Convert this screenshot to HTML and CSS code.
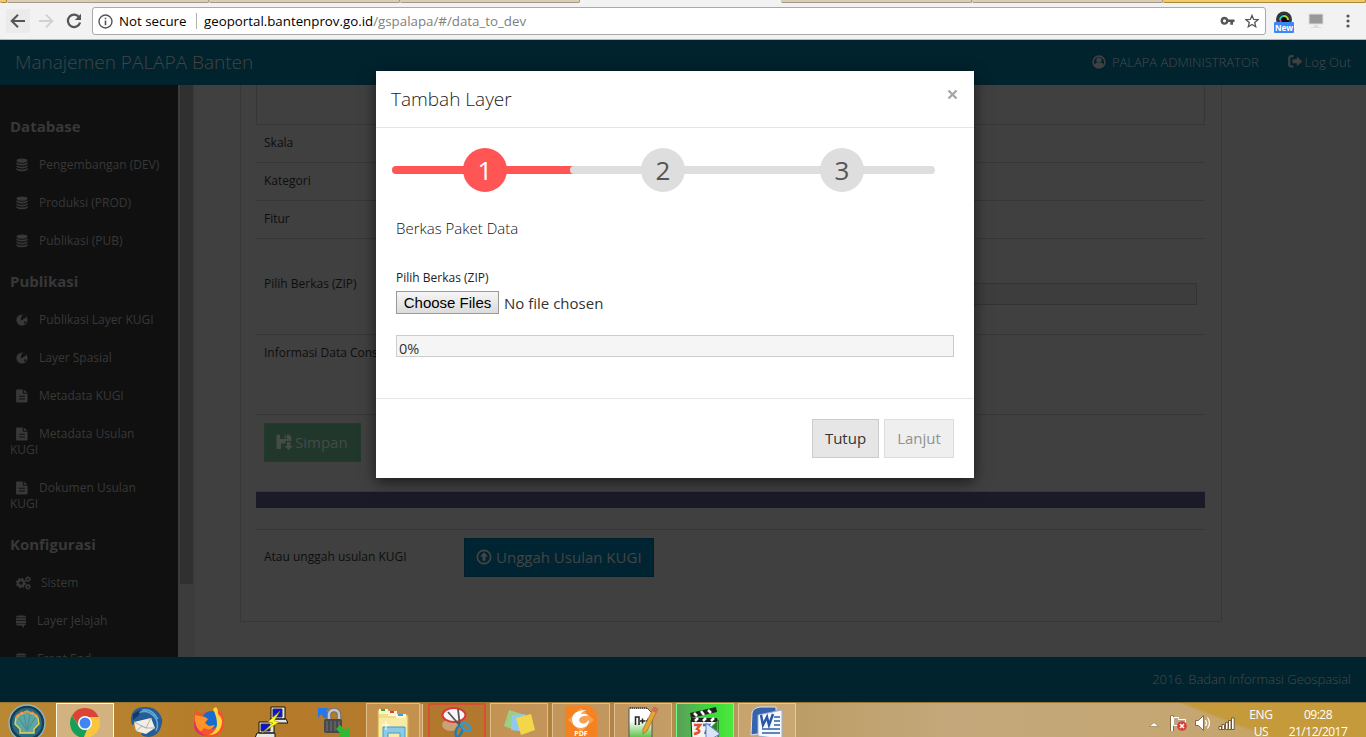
FILE: index.html
```html
<!DOCTYPE html>
<html lang="id">
<head>
<meta charset="utf-8">
<title>Manajemen PALAPA Banten</title>
<link rel="stylesheet" href="styles.css">
</head>
<body>
<svg class="defs" width="0" height="0" aria-hidden="true">
  <symbol id="db" viewBox="0 0 12 14"><ellipse cx="6" cy="2.600" rx="5.600" ry="2.200"/><path d="M.4 4.300q2 1.500 5.600 1.500t5.600-1.500v1.600q-1.500 1.600-5.600 1.600T.4 5.900zM.4 7.200q2 1.500 5.600 1.500t5.600-1.500v1.600q-1.500 1.600-5.600 1.600T.4 8.800zM.4 10.100q2 1.500 5.600 1.500t5.600-1.500v1.600q-1.500 1.600-5.600 1.600T.4 11.700z"/></symbol>
  <symbol id="globe" viewBox="0 0 12 14"><circle cx="6" cy="7" r="5.600"/><path fill="#101010" d="M5.500 2.600l2.600-.7 2 1.600-.6 1.800-1.800.3-1.200 1.500-1.300.2-.5-1.600.8-1zM8.500 8.200l1.900.2-.8 1.800-1.500.9z"/></symbol>
  <symbol id="file" viewBox="0 0 12 14"><path fill-rule="evenodd" d="M.8.5h6v4.2h4.700v8.100a.7.7 0 0 1-.7.7H.8a.7.7 0 0 1-.7-.7V1.200A.7.7 0 0 1 .8.500zM3 6.700v1h6v-1zM3 9.500v1h6v-1z"/><path d="M7.800.5l3.700 3.300H7.800z"/></symbol>
  <symbol id="cogs" viewBox="0 0 15 14"><circle cx="5" cy="7" r="3" fill="none" stroke="currentColor" stroke-width="2.400"/><circle cx="5" cy="7" r="4.500" fill="none" stroke="currentColor" stroke-width="1.400" stroke-dasharray="2 1.530"/><circle cx="12" cy="3.200" r="1.700" fill="none" stroke="currentColor" stroke-width="1.500"/><circle cx="12" cy="3.200" r="2.500" fill="none" stroke="currentColor" stroke-dasharray="1.300 1.310"/><circle cx="12" cy="10.800" r="1.700" fill="none" stroke="currentColor" stroke-width="1.500"/><circle cx="12" cy="10.800" r="2.500" fill="none" stroke="currentColor" stroke-dasharray="1.300 1.310"/></symbol>
  <symbol id="stack" viewBox="0 0 10 14"><path d="M2 1.500h6a2 2 0 0 1 2 2H0a2 2 0 0 1 2-2zM0 4.200h10v2H0zM0 6.900h10v2H0zM0 9.600h10a2 2 0 0 1-2 2v2.400L5.600 11.600H2a2 2 0 0 1-2-2z"/></symbol>
</svg>

<div class="screen">
  <div class="tabs"><i class="tab gold t0"></i><i class="tab t1"></i><i class="tab t2"></i><i class="tab t3"></i><i class="tab open"></i><i class="tab t4"></i><i class="tab t5"></i><i class="tab gold t6"></i></div>
  <div class="toolbar">
    <span class="nav back"><svg width="16" height="16" viewBox="0 0 16 16"><path d="M15 8H2.500M8 1.700L1.700 8L8 14.300" fill="none" stroke="#555" stroke-width="2"/></svg></span>
    <span class="nav"><svg width="16" height="16" viewBox="0 0 16 16"><path d="M1 8h12.500M8 1.700L14.300 8L8 14.300" fill="none" stroke="#d0d0d0" stroke-width="1.800"/></svg></span>
    <span class="nav reload"><svg width="16" height="16" viewBox="0 0 16 16"><path d="M13.300 4.400A6.200 6.200 0 1 0 14.100 9.500" fill="none" stroke="#555" stroke-width="2.200"/><path d="M15 .8V7H8.800z" fill="#555"/></svg></span>
    <div class="omnibox">
      <svg class="info" width="15" height="15" viewBox="0 0 15 15"><circle cx="7.500" cy="7.500" r="6.500" fill="none" stroke="#555" stroke-width="1.400"/><path d="M6.700 6.500h1.600v4.700H6.700zM6.700 3.700h1.600v1.600H6.700z" fill="#555"/></svg>
      <span class="secure">Not secure</span><i class="sep"></i>
      <span class="url">geoportal.bantenprov.go.id<span class="path">/gspalapa/#/data_to_dev</span></span>
      <svg class="key" width="15" height="10" viewBox="0 0 15 10"><path fill="#555" fill-rule="evenodd" d="M4.500.8a4 4 0 0 1 3.900 2.700H14.500V6H13v2.700h-2.700V6H8.400A4 4 0 1 1 4.500.8zm0 2.500a1.500 1.500 0 1 0 0 3.100 1.500 1.500 0 0 0 0-3.100z"/></svg>
      <svg class="star" width="14" height="14" viewBox="0 0 14 14"><path d="M7 1.400l1.700 4 4.300.3-3.300 2.800 1 4.200L7 10.400l-3.700 2.300 1-4.200L1 5.700l4.300-.3z" fill="none" stroke="#555" stroke-width="1.300"/></svg>
    </div>
    <span class="ext"><svg width="20" height="22" viewBox="0 0 20 22"><circle cx="10" cy="8.500" r="8" fill="#30363d"/><circle cx="10" cy="8.500" r="5" fill="#0b0b0b"/><path d="M6 9a4 4 0 0 1 4-4" stroke="#19d3c5" stroke-width="2" fill="none"/><path d="M10 5a4 4 0 0 1 4 4" stroke="#b8d82c" stroke-width="2" fill="none"/><path d="M6.500 8.500v3" stroke="#e23a7a" stroke-width="2"/><rect y="11" width="20" height="11" rx="1" fill="#3f86f5"/></svg><b>New</b></span>
    <svg class="monitor" width="16" height="16" viewBox="0 0 16 16"><rect x=".5" y=".5" width="15" height="11" fill="#ddd"/><rect x="1.500" y="1.500" width="13" height="9" fill="#999"/><path d="M6 12h4v2h3v1H3v-1h3z" fill="#ddd"/></svg>
    <svg class="menu" width="4" height="14" viewBox="0 0 4 14"><circle cx="2" cy="2" r="1.600"/><circle cx="2" cy="7" r="1.600"/><circle cx="2" cy="12" r="1.600"/></svg>
  </div>

  <header class="appbar">
    <span class="brand">Manajemen PALAPA Banten</span>
    <span class="user"><svg width="14" height="14" viewBox="0 0 14 14"><circle cx="7" cy="7" r="5.900" fill="none" stroke="currentColor" stroke-width="1.600"/><circle cx="7" cy="5.200" r="2.600"/><path d="M2.200 10.500Q3 8 5 7.600q2 1 4 0 2 .4 2.800 2.900Q9.800 13 7 13t-4.800-2.500z"/></svg><span class="username">PALAPA ADMINISTRATOR</span></span>
    <span class="logout"><svg width="15" height="13" viewBox="0 0 15 13"><path d="M5.500 1.200H3A2 2 0 0 0 1.200 3v6.500A2 2 0 0 0 3 11.500h2.500" fill="none" stroke="currentColor" stroke-width="2.200"/><path d="M4.500 4.300h4.300V1.500l5.500 4.900-5.500 4.900V8.300H4.500z"/></svg><span class="outlabel">Log Out</span></span>
  </header>

  <div class="work">
    <nav class="side">
      <h4>Database</h4>
      <a><svg class="ic"><use href="#db"/></svg>Pengembangan (DEV)</a>
      <a><svg class="ic"><use href="#db"/></svg>Produksi (PROD)</a>
      <a><svg class="ic"><use href="#db"/></svg>Publikasi (PUB)</a>
      <h4>Publikasi</h4>
      <a><svg class="ic"><use href="#globe"/></svg>Publikasi Layer KUGI</a>
      <a><svg class="ic"><use href="#globe"/></svg>Layer Spasial</a>
      <a><svg class="ic"><use href="#file"/></svg>Metadata KUGI</a>
      <a><svg class="ic"><use href="#file"/></svg>Metadata Usulan<br>KUGI</a>
      <a><svg class="ic"><use href="#file"/></svg>Dokumen Usulan<br>KUGI</a>
      <h4>Konfigurasi</h4>
      <a><svg class="ic wide"><use href="#cogs"/></svg>Sistem</a>
      <a><svg class="ic slim"><use href="#stack"/></svg>Layer Jelajah</a>
      <a><svg class="ic slim"><use href="#stack"/></svg>Front End</a>
    </nav>
    <div class="scroll"><i></i></div>
    <main class="main">
      <div class="panel">
        <div class="box"></div>
        <div class="row">Skala</div>
        <div class="row">Kategori</div>
        <div class="row">Fitur</div>
        <div class="row tall"><span>Pilih Berkas (ZIP)</span><i class="meter"></i></div>
        <div class="row info-row">Informasi Data Cons</div>
        <div class="save-row"><span class="btn save"><svg width="17" height="16" viewBox="0 0 17 16"><path fill-rule="evenodd" d="M.5.500H13l2.500 2.500V7H9.500V9.500H5V15H.5zM4 .500V5h7V.500zM8.500 1.200h1.800v3H8.500z"/><path d="M11 8h3.500v4H17l-4.200 4L8.500 12H11z"/></svg>Simpan</span></div>
        <div class="band"></div>
        <div class="upload-row"><span class="uplabel">Atau unggah usulan KUGI</span><span class="btn upload"><svg width="16" height="16" viewBox="0 0 16 16"><circle cx="8" cy="8" r="6.700" fill="none" stroke="currentColor" stroke-width="1.700"/><path d="M8 3.300l4 4.200H9.500v4.300h-3V7.500H4z"/></svg>Unggah Usulan KUGI</span></div>
      </div>
    </main>
  </div>

  <footer class="foot">2016. Badan Informasi Geospasial</footer>

  <div class="taskbar">
    <span class="task first"><svg width="38" height="38" viewBox="0 0 38 38"><circle cx="19" cy="19" r="18" fill="#173d52" stroke="#8fb4bd" stroke-width="1.500"/><circle cx="19" cy="19" r="15" fill="#286a80"/><path d="M12 29v-4l-5-5 1-6 4-4 3-1 4-2 4 2 3 1 4 4 1 6-5 5v4z" fill="#5fa5a4" stroke="#e9d252" stroke-width="1.400"/><path d="M8 14q0-3 4-4 1-3 4-1 3-3 6 0 3-2 4 1 4 1 4 4" stroke="#ed8a3d" stroke-width="1.500" fill="none"/><path d="M19 27L11 14M19 27L16 11M19 27l3-16M19 27l8-13" stroke="#4a9298" stroke-width="1.200" fill="none"/></svg></span>
    <span class="task lit chrome"><svg width="32" height="32" viewBox="0 0 32 32"><circle cx="16" cy="16" r="15" fill="#f8c63d"/><path d="M3 8.500A15 15 0 0 1 29.700 10H16a6.500 6.500 0 0 0-6 9z" fill="#da4437"/><path d="M3 8.500L10 19.500a6.500 6.500 0 0 0 8 3L14.500 31A15 15 0 0 1 3 8.500z" fill="#169e5a"/><circle cx="16" cy="16" r="7" fill="#fff"/><circle cx="16" cy="16" r="5.500" fill="#4384f3"/></svg></span>
    <span class="task"><svg width="34" height="32" viewBox="0 0 34 32"><path d="M2 8Q5 1 14 1q10-1 15 6 5 6 2 14-3 9-12 10-6 0-8-3l9-6 2-10-12 3-8 4Q0 13 2 8z" fill="#245d98"/><path d="M8 7q9-4 16 3 6 7 2 15M12 4q10-2 16 9" stroke="#63add6" stroke-width="1.500" fill="none"/><path d="M4 16l17-4 4 10-9 6-10-3z" fill="#f1eee5"/><path d="M4 16l12 6 5-10M6 25l6-5 4 2 9 0" stroke="#b9b3a5" fill="none"/><path d="M3 8l7-4-1 5-6 5z" fill="#163966"/></svg></span>
    <span class="task"><svg width="32" height="32" viewBox="0 0 32 32"><path d="M3 4l4 4 5-2q8-3 13 3l-1-7q8 7 7 15-1 14-15 14Q1 30 1 17 1 9 3 4z" fill="#f4532d"/><circle cx="18" cy="14" r="9" fill="#176bd0"/><path d="M20 3q5-5 5 5 6 5 3 13-3 8-12 8 8-4 8-11 0-7-4-15z" fill="#ffd43c"/><path d="M2 9q5 1 10 2l3 2-3 4 4 3 6-1q-4 7-11 3-3 5-5 2Q1 19 2 9z" fill="#fd9227"/><path d="M2 13q0 13 12 17Q1 29 1 18z" fill="#db2e70"/></svg></span>
    <span class="task"><svg width="34" height="34" viewBox="0 0 34 34"><g fill="#e6e6e6" stroke="#111"><path d="M17 1h14v12H17zM16 13h16l2 4H18zM5 16h15v11H5zM3 27h18v5H1z"/></g><path d="M19 3h9v8h-9zM7 18h9v7H7z" fill="#1010d9" stroke="#333"/><path d="M26 5L14 16l5 1-11 10 17-11-5-1z" fill="#ff2" stroke="#9c8b00" stroke-width=".6"/></svg></span>
    <span class="task"><svg width="34" height="34" viewBox="0 0 34 34"><path d="M2 2h11L10 5l3 4-4 4-4-5-3 4z" fill="#2677ed"/><path d="M13 15V8q1-4 5-4t5 4v7" stroke="#6f6f6f" stroke-width="4.500" fill="none"/><path d="M13 15V8q1-4 5-4t5 4v7" stroke="#c4c4c4" stroke-width="2.500" fill="none"/><rect x="8" y="13" width="18" height="14" rx="2" fill="#494949"/><path d="M11 15v10M15 15v10M19 15v10M23 15v10" stroke="#777"/><path d="M33 31H22l3-3-5-5 4-4 5 5 4-3z" fill="#2cb934"/></svg></span>
    <span class="task lit explorer"><svg width="34" height="34" viewBox="0 0 34 34"><path d="M2 4h9l2 3h7l2 2h10v25H2z" fill="#f1dc83" stroke="#cfad50"/><path d="M3 3h9v5H3zM12 5h9v5h-9zM20 8h10v4H20z" fill="#fff6ce"/><path d="M5 3h4v2H5z" fill="#2cac3c"/><path d="M14 5h4v2h-4z" fill="#da3e2e"/><path d="M22 8h5v2h-5z" fill="#3a9be0"/><path d="M3 12h28v20H3z" fill="#f8e9a4"/><path d="M7 34V21h22v13h-5v-7H12v7z" fill="#8ccbe5" stroke="#429bc8"/><path d="M10 15v9M6 19h8" stroke="#fff"/></svg></span>
    <span class="task snip"><svg width="32" height="34" viewBox="0 0 32 34"><ellipse cx="10" cy="18" rx="9" ry="6" fill="#cda177"/><ellipse cx="13" cy="8" rx="11.500" ry="7" fill="#f7f7f7" stroke="#d83a3a" stroke-width="2"/><path d="M7 5l14 16M17 2l2 18" stroke="#555" stroke-width="1.800"/><ellipse cx="18" cy="24" rx="3" ry="6" transform="rotate(20 18 24)" fill="none" stroke="#227eae" stroke-width="2.500"/><ellipse cx="25" cy="20" rx="3" ry="5.500" transform="rotate(-55 25 20)" fill="none" stroke="#369bcc" stroke-width="2.500"/></svg></span>
    <span class="task lit"><svg width="34" height="30" viewBox="0 0 34 30"><path d="M7 4l13 4-4 17L2 20z" fill="#9acf86"/><path d="M10 9l13-1 2 18-16-2z" fill="#91c9ee"/><path d="M14 12l15-4 4 16-14 5z" fill="#f4d64b"/></svg></span>
    <span class="task lit foxit"><svg width="32" height="34" viewBox="0 0 32 34"><path d="M0 0h24v8h8v26H0z" fill="#f58220"/><path d="M25 0l7 7h-7z" fill="#f58220"/><path d="M16 2l13 12-13 12L3 14z" fill="#f9a050"/><path d="M22 4Q7 4 7 14q1 8 9 8 8-1 8-8-4 5-8 3-4-3 0-6 4-2 7-1-1-3-7-2 1-3 6-4z" fill="#fff"/></svg><b>PDF</b></span>
    <span class="task lit npp"><svg width="34" height="34" viewBox="0 0 34 34"><defs><linearGradient id="ng" x2="0" y2="1"><stop offset=".4" stop-color="#fff"/><stop offset="1" stop-color="#48b929"/></linearGradient></defs><path d="M3 2h18l5 5v27H3z" fill="url(#ng)" stroke="#555"/><path d="M4 2h18" stroke="#555" stroke-width="2" stroke-dasharray="1 1"/><path d="M9.500 19V11h3.500v8M16.500 12.500v5M14 15h5M22 12.500v5M19.500 15h5" stroke="#222" stroke-width="1.500" fill="none"/><path d="M28 1l4 2-11 22-4 3v-5z" fill="#e8a735" stroke="#9b6c1d" stroke-width=".7"/><path d="M28 1l4 2-2 4-4-2z" fill="#d96560"/></svg></span>
    <span class="task green"><svg width="32" height="34" viewBox="0 0 32 34"><path d="M2 14h27v20H3z" fill="#f2f2f2" stroke="#222"/><path d="M1 7L27 1l1 5L2 12zM2 12h26v4H2z" fill="#222"/><path d="M5 7l3 3M12 5l3 4M19 4l3 3M6 15l3-3M14 15l3-3M22 15l3-3" stroke="#fff" stroke-width="2.500"/><path d="M5 19h6l-3 4q6 3-3 5" stroke="#e3512d" stroke-width="2.500" fill="none"/><path d="M14 19h6l-4 9" stroke="#267eb6" stroke-width="2.500" fill="none"/><path d="M28 15v10l-6-4z" fill="#248a29"/><path d="M17 17l14 11-14 8z" fill="#d9e4fb" stroke="#6981c7"/></svg></span>
    <span class="task lit word"><svg width="34" height="34" viewBox="0 0 34 34"><path d="M2 7q1-5 8-6h16v24L1 29z" fill="#3563ad" stroke="#d9e5f7"/><path d="M8 9L32 4v29L8 30z" fill="#f5f8fd" stroke="#9cafd0"/><path d="M11 9l2 10 4-8 2 8 4-11" stroke="#2857a5" stroke-width="2.500" fill="none"/><path d="M24 11h6M24 15h6M24 19h6M12 23h18M12 27h18" stroke="#315da5" stroke-width="1.700"/></svg></span>
    <div class="tray">
      <svg width="96" height="24" viewBox="0 0 96 24"><path d="M2.500 15.500L7 11.500l4.500 4z" fill="#fff" stroke="#8e7341" stroke-width=".6"/><path d="M25 4.500v15.500" stroke="#6d5426" stroke-width="3.400"/><path d="M25 5v15" stroke="#fff" stroke-width="2"/><path d="M26.500 6.500h5v2h7v8h-7v-2h-5z" fill="#b9a98c" stroke="#fff"/><circle cx="35" cy="15" r="4.800" fill="#dc3c34"/><path d="M33 13l4 4M37 13l-4 4" stroke="#fff" stroke-width="1.500"/><path d="M48.500 9.500h3l5-5v15l-5-5h-3z" fill="#fff" stroke="#6d5426" stroke-width=".8"/><path d="M58.500 9q2 3 0 6M60.500 6.500q4 5.500 0 11" stroke="#fff" stroke-width="1.200" fill="none"/><g fill="#fff" stroke="#5a4317" stroke-width=".8"><path d="M72 15.500h2.500v3H72zM75 13.500h2.500v5H75zM78.500 11.500h2.500v7h-2.500zM81.500 9.500h2.500v9h-2.500zM84.500 7h2.700v11.500h-2.700z"/></g></svg>
      <div class="lang">ENG<br>US</div>
      <div class="clock">09:28<br>21/12/2017</div>
    </div>
  </div>

  <div class="modal">
    <div class="modal-head"><span class="title">Tambah Layer</span><svg width="11" height="11" viewBox="0 0 11 11"><path d="M1.500 1.500l8 8M9.500 1.500l-8 8" stroke="#a5a5a5" stroke-width="2.300"/></svg></div>
    <div class="modal-body">
      <div class="steps"><div class="step on"><b>1</b></div><div class="step second"><b>2</b></div><div class="step third"><b>3</b></div></div>
      <div class="fields">
        <div class="section">Berkas Paket Data</div>
        <div class="label">Pilih Berkas (ZIP)</div>
        <div class="picker"><span class="choose">Choose Files</span><span class="nofile">No file chosen</span></div>
        <div class="progress">0%</div>
      </div>
    </div>
    <div class="modal-foot"><span class="mbtn">Tutup</span><span class="mbtn off">Lanjut</span></div>
  </div>
</div>
</body>
</html>
```
FILE: styles.css
```css
* { box-sizing: border-box; }
body { margin: 0; font-family: "Open Sans", "Noto Sans", sans-serif; font-size: 12px; overflow: hidden; }
svg { display: block; flex: none; fill: currentColor; }
span, b { white-space: nowrap; }
.defs { position: absolute; }
.screen { width: 1366px; height: 737px; position: relative; overflow: hidden; display: flex; flex-direction: column; background: #404040; }

/* browser chrome */
.tabs { height: 3px; display: flex; background: #f2f2f2; flex: none; }
.tab { height: 3px; background: #d9cfb8; border-bottom: 1px solid #a39a83; border-right: 1px solid #a39a83; border-radius: 0 0 2px 2px; }
.t0 { width: 7px; } .t1 { width: 202px; } .t2 { width: 191px; } .t3 { width: 180px; }
.open { width: 201px; background: #f2f2f2; border: 0; }
.t4 { width: 191px; } .t5 { width: 191px; } .t6 { flex: 1; }
.gold { background: #f4c967; border-color: #a8873f; }
.toolbar { height: 37px; flex: none; background: #f2f2f2; border-bottom: 1px solid #b5b5b5; display: flex; align-items: center; padding: 1px 16px 1px 6px; }
.nav { width: 24px; height: 24px; display: flex; align-items: center; justify-content: center; margin-right: 4px; }
.back { background: #ebebeb; }
.reload { margin-right: 6px; }
.omnibox { width: 1174px; height: 28px; border: 1px solid #a9a9a9; border-radius: 3px; background: #fff; display: flex; align-items: center; padding: 0 6px 0 5px; font-size: 13.3px; color: #000; }
.info { margin-right: 6px; }
.secure { width: 77px; }
.sep { width: 1px; height: 16px; background: #b0b0b0; margin-right: 7px; }
.url { flex: 1; }
.path { color: #808080; }
.key { margin-right: 10px; }
.ext { position: relative; width: 20px; height: 22px; margin-left: 8px; margin-top: 2px; }
.ext b { position: absolute; left: 0; right: 0; top: 12px; text-align: center; color: #fff; font-size: 8px; line-height: 10px; }
.monitor { margin-left: 14px; }
.menu { margin-left: auto; color: #555; }

/* application */
.appbar { height: 45px; flex: none; background: #00232e; color: #444; display: flex; align-items: center; padding: 0 15px 2px; }
.brand { flex: 1; font-size: 19px; font-weight: 300; }
.user, .logout { display: flex; align-items: center; font-size: 13px; font-weight: 300; color: #4a4a4a; }
.user svg, .logout svg { color: #404040; }
.user svg { margin-right: 6px; }
.logout { margin-left: 29px; }
.logout svg { margin-right: 2px; }
.work { height: 572px; flex: none; display: flex; }
.side { width: 178px; background: #101010; color: #383838; padding-top: 19px; overflow: hidden; }
.side h4 { margin: 0; padding: 3px 0 0 10px; height: 41px; font-size: 15px; line-height: 38px; }
.side a { display: block; padding: 12px 0 10px 10px; line-height: 16px; white-space: nowrap; }
.ic { display: inline-block; width: 12px; height: 14px; margin: 0 11px 0 6px; vertical-align: -3px; }
.ic.wide { width: 15px; margin-right: 10px; }
.ic.slim { width: 10px; }
.scroll { width: 17px; background: #3c3c3c; padding-left: 2px; }
.scroll i { display: block; width: 13px; height: 499px; background: #303030; }
.main { flex: 1; padding-left: 45px; }
.panel { width: 982px; height: 537px; border: 1px solid #373737; border-top: 0; padding: 0 16px 0 15px; color: #0e0e0e; }
.box { height: 40px; border: 1px solid #363636; border-top: 0; }
.row { height: 38px; border-bottom: 1px solid #363636; padding: 0 8px; line-height: 36px; }
.tall { height: 96px; display: flex; align-items: center; line-height: 16px; padding-bottom: 5px; }
.tall span { width: 200px; }
.meter { flex: 1; height: 22px; margin-top: 19px; border: 1px solid #333; background: #3d3d3d; }
.info-row { height: 80px; }
.save-row { height: 77px; padding: 8px 8px 0; border-bottom: 1px solid #383838; }
.btn { height: 39px; display: flex; align-items: center; font-size: 15px; }
.save { width: 97px; padding: 0 0 2px 11px; background: #22372b; border: 1px solid #213a2b; color: #454b47; }
.save svg { margin-right: 2px; }
.band { height: 16px; background: #1b1a28; }
.upload-row { margin-top: 21px; border-top: 1px solid #363636; padding: 8px 8px 0; display: flex; align-items: center; }
.uplabel { width: 200px; padding-bottom: 2px; }
.upload { width: 190px; padding: 0 0 2px 11px; background: #002431; border: 1px solid #001f2a; color: #454545; }
.upload svg { margin-right: 4px; }
.foot { height: 45px; flex: none; background: #00232e; color: #4a4a4a; font-size: 13px; font-weight: 300; line-height: 45px; text-align: right; padding-right: 15px; }

/* taskbar */
.taskbar { height: 35px; flex: none; display: flex; gap: 4px; overflow: hidden; border-top: 1px solid #9c7434; background: linear-gradient(21deg, transparent 32px, #c49a3b 35px) right top / 190px 34px no-repeat, linear-gradient(90deg, #b98835 0, #b57c29 220px, #b4792d 420px, #b18449 620px, #bb9c64 780px, #c4a87b 950px, #c5a672 1200px, #c6a04a 100%); }
.task { width: 58px; height: 44px; flex: none; display: flex; justify-content: center; padding-top: 2px; position: relative; border: 1px solid transparent; }
.first { width: 52px; padding-top: 0; }
.first svg { margin-left: 1px; }
.lit { background: rgba(225, 190, 140, .35); border-color: rgba(245, 225, 185, .55); }
.chrome { background: #d2b281; border-color: #fff6e3; padding-top: 3px; }
.explorer { width: 54px; margin-right: 4px; box-shadow: 3px 0 0 -1px #c89c64, 4px 0 0 -1px #e2c292; }
.snip { background: #b2782d; border: 2px solid #d45136; }
.green { border: 1px solid #70ff83; background: linear-gradient(90deg, #5c9d5c, #3bdc36 60%, #4be83f); }
.foxit b { position: absolute; top: 25px; left: 0; right: 0; text-align: center; font-size: 7px; line-height: 10px; color: #fff; }
.tray { margin-left: auto; display: flex; padding: 3px 12px 0 0; color: #fff; font-size: 12px; line-height: 17px; text-align: center; }
.tray svg { margin-top: 5px; }
.lang { width: 40px; margin-left: -2px; letter-spacing: -.3px; }
.clock { width: 72px; margin-left: 1px; letter-spacing: -.5px; }

/* dialog */
.modal { position: absolute; left: 376px; top: 71px; width: 598px; height: 407px; background: #fff; box-shadow: 0 4px 14px rgba(0, 0, 0, .6); display: flex; flex-direction: column; color: #222; }
.modal-head { height: 57px; border-bottom: 1px solid #e5e5e5; padding: 0 16px 0 15px; display: flex; align-items: center; justify-content: space-between; }
.title { font-size: 19px; font-weight: 300; }
.modal-head svg { margin-bottom: 10px; }
.modal-body { flex: 1; }
.steps { display: flex; padding: 20px 0 0 16px; }
.step { width: 186px; height: 44px; flex: none; display: flex; justify-content: center; position: relative; z-index: 0; }
.step::before { content: ""; position: absolute; z-index: -1; left: 0; right: 0; top: 18px; height: 8px; border-radius: 4px; background: #dedede; }
.second { margin-left: -8px; }
.third { margin-left: -7px; }
.step b { width: 44px; height: 44px; border-radius: 50%; background: #dedede; color: #555; font-weight: 400; font-size: 26px; line-height: 44px; text-align: center; }
.step.on::before, .step.on b { background: #ff5555; }
.step.on b { color: #fff; }
.fields { padding: 26px 20px 0; }
.section { font-size: 15px; font-weight: 300; line-height: 20px; color: #111; }
.label { margin-top: 31px; line-height: 18px; }
.picker { display: flex; align-items: center; height: 23px; margin-top: 4px; }
.choose { width: 103px; height: 23px; border: 1px solid #999; background: linear-gradient(#f5f5f5, #dcdcdc); font: 15px/21px "Liberation Sans", Arial, sans-serif; text-align: center; color: #000; }
.nofile { margin-left: 5px; font-size: 15px; color: #333; }
.progress { height: 22px; margin-top: 21px; border: 1px solid #ccc; background: #f5f5f5; font-size: 14.500px; line-height: 25px; padding-left: 2px; color: #333; }
.modal-foot { height: 80px; border-top: 1px solid #e5e5e5; display: flex; justify-content: flex-end; gap: 5px; padding: 20px 20px 0 0; }
.mbtn { width: 67px; height: 39px; border: 1px solid #ccc; background: #e6e6e6; font-size: 15px; line-height: 37px; text-align: center; color: #333; }
.off { width: 70px; background: #efefef; border-color: #ddd; color: #919191; }
```
